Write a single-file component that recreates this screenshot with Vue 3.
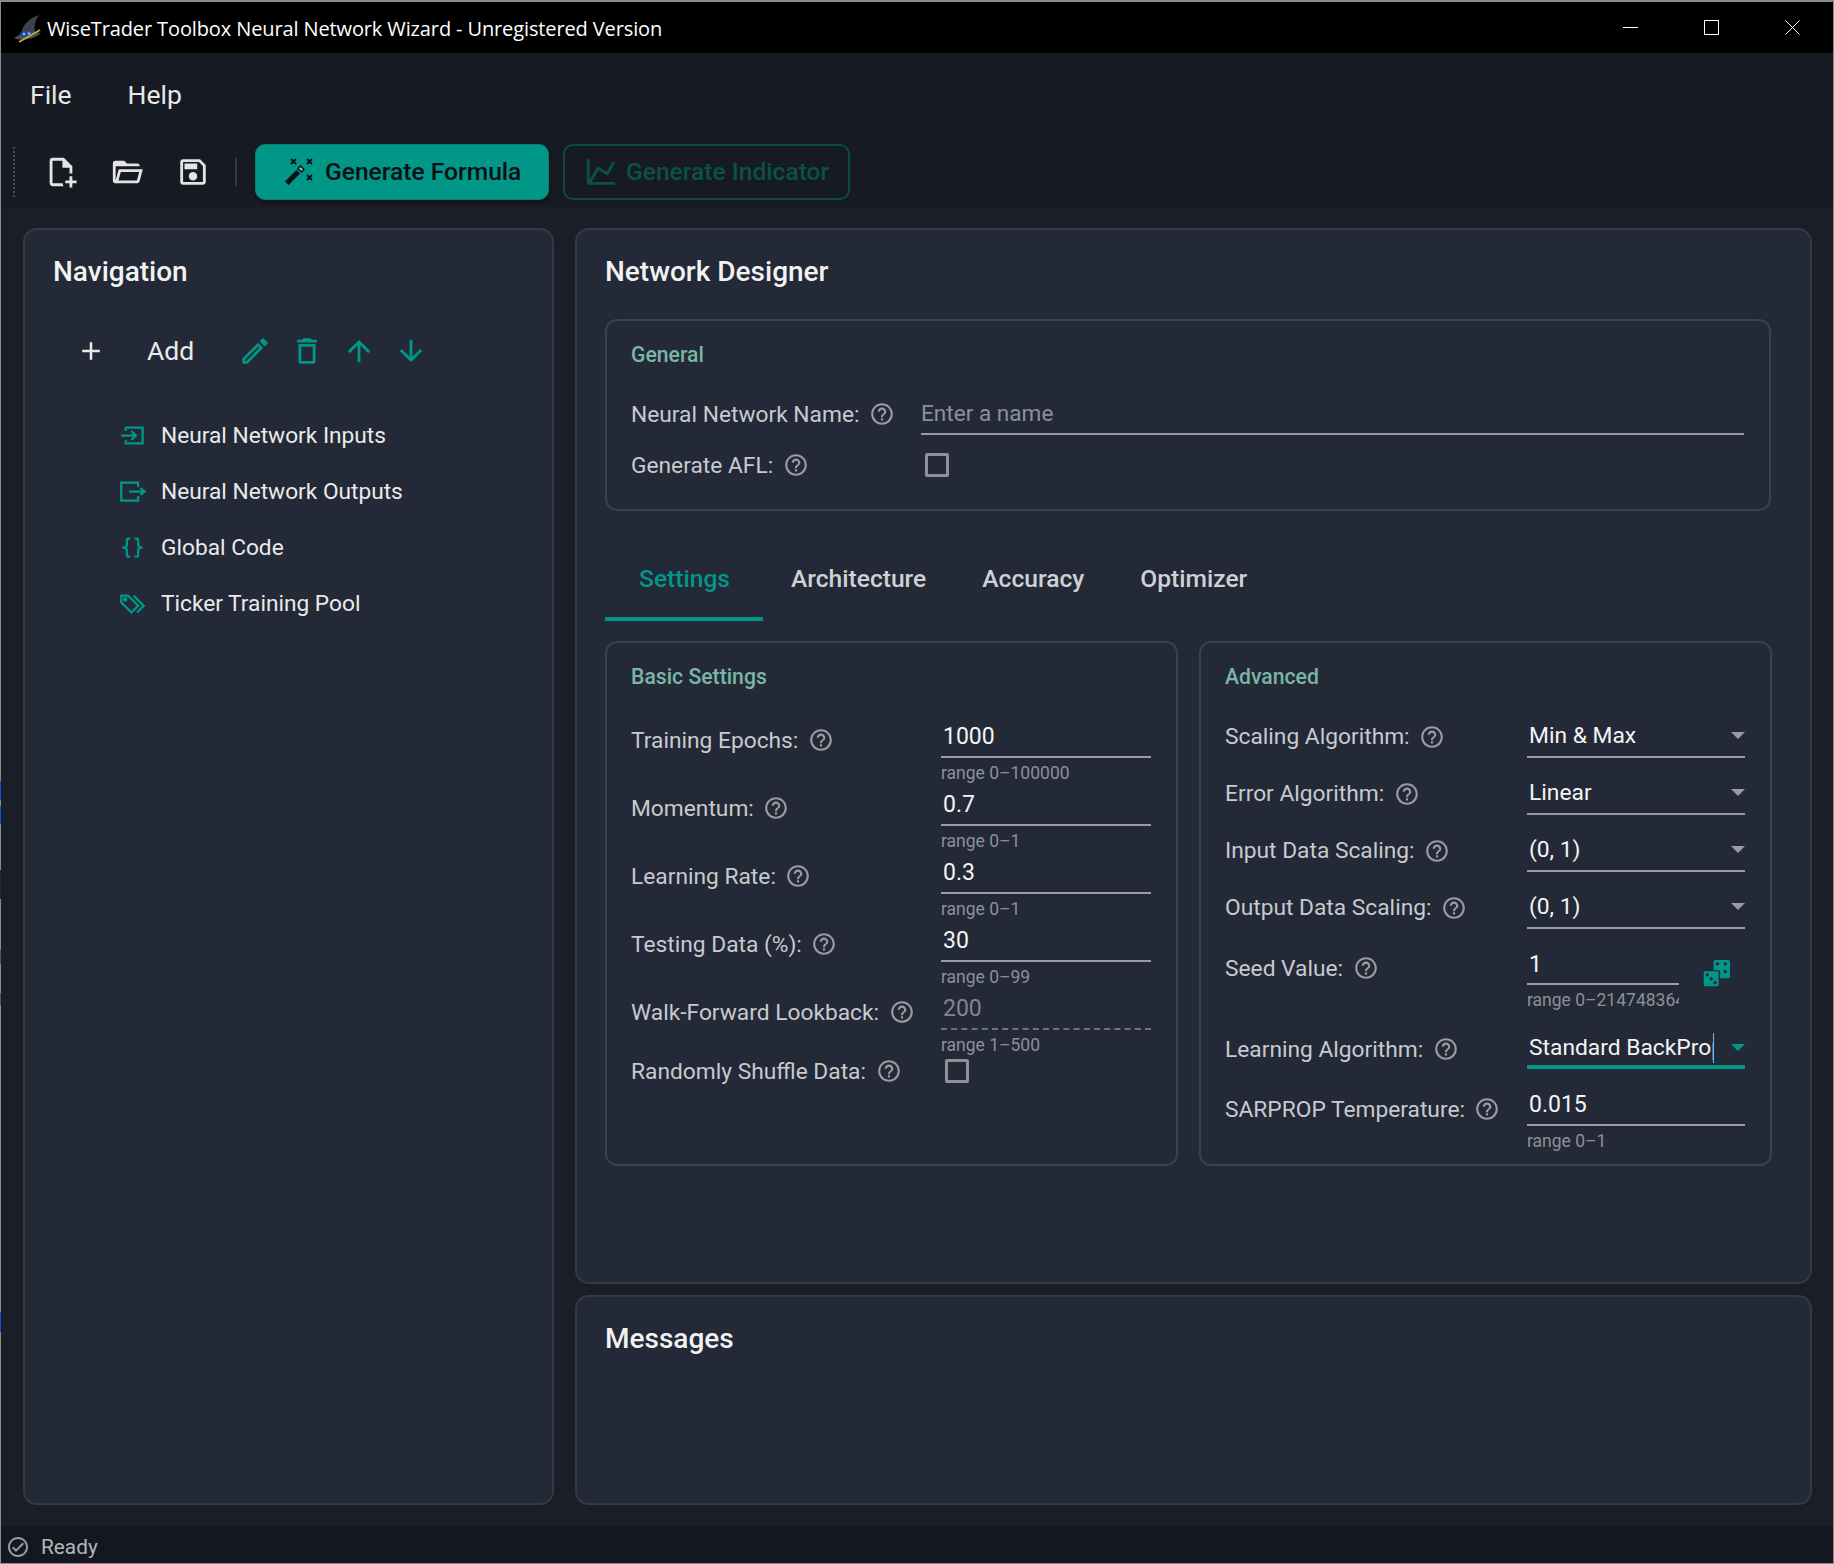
<template>
  <div class="window">
    <!-- bits of the desktop showing past the window edge -->
    <i v-for="s in edgeBits" :key="s.top" class="edge-bit" :style="{ top: s.top + 'px', height: s.height + 'px', background: s.color }"></i>

    <!-- title bar -->
    <div class="titlebar">
      <svg class="hat" viewBox="0 0 28 28">
        <path d="M7 18 C9 11 13 4 25 0 C21 5 20 11 21 17 Z" fill="#3f4247" />
        <path d="M0 23 C6 18 20 16 27 18 C22 23 8 27 0 23 Z" fill="#4d5056" />
        <path d="M6 18 C11 16 16 16 21 16 L21 20 C16 21 11 22 7 22 Z" fill="#234a9c" />
        <circle cx="10" cy="19" r="1.300" fill="#5fd0e8" />
        <circle cx="15" cy="18.500" r="1.300" fill="#5fd0e8" />
        <path d="M5 27 L26 15" stroke="#d7a92c" stroke-width="1.600" />
      </svg>
      <span class="title-text">WiseTrader Toolbox Neural Network Wizard - Unregistered Version</span>
      <div class="win-buttons">
        <svg viewBox="0 0 15 15"><path d="M0 7.500H15" stroke="#fff" stroke-width="1" /></svg>
        <svg viewBox="0 0 15 15"><rect x="0.500" y="0.500" width="14" height="14" fill="none" stroke="#fff" stroke-width="1" /></svg>
        <svg viewBox="0 0 15 15"><path d="M0.500 0.500L14.500 14.500M14.500 0.500L0.500 14.500" stroke="#fff" stroke-width="1" /></svg>
      </div>
    </div>

    <!-- menu + toolbar -->
    <div class="top-area">
      <div class="menubar">
        <span>File</span>
        <span>Help</span>
      </div>
      <div class="toolbar">
        <div class="grip"></div>
        <svg class="tool-icon" viewBox="0 0 24 24"><path :d="icons.fileplus" /></svg>
        <svg class="tool-icon" viewBox="0 0 24 24"><path :d="icons.folder" /></svg>
        <svg class="tool-icon" viewBox="0 0 24 24"><path :d="icons.save" /></svg>
        <div class="tool-sep"></div>
        <div class="btn-primary">
          <svg class="btn-icon wand" viewBox="0 0 28 28">
            <path d="M0 23.500 L11.500 12 L15 15.500 L3.500 27 Z" fill="#0b0f14" />
            <path d="M13 10.500 L15.500 8 L19 11.500 L16.500 14 Z" fill="#7fd0c6" stroke="#0b0f14" stroke-width="1.500" />
            <path d="M6 1L11 6M11 1L6 6M22 1L27 6M27 1L22 6M22 17L27 22M27 17L22 22" stroke="#0b0f14" stroke-width="1.800" />
          </svg>
          <span>Generate Formula</span>
        </div>
        <div class="btn-disabled">
          <svg class="btn-icon chart" viewBox="0 0 24 24"><path :d="icons.chart" fill="#0d4f4a" /></svg>
          <span>Generate Indicator</span>
        </div>
      </div>
    </div>

    <div class="main">
      <!-- navigation -->
      <section class="panel nav-panel">
        <h2 class="panel-title">Navigation</h2>
        <div class="nav-actions">
          <svg class="add-plus" viewBox="0 0 24 24"><path :d="icons.plus" /></svg>
          <span class="add-label">Add</span>
          <svg class="action" viewBox="0 0 24 24"><path :d="icons.pencil" /></svg>
          <svg class="action" viewBox="0 0 24 24"><path :d="icons.trash" /></svg>
          <svg class="action" viewBox="0 0 24 24"><path :d="icons.up" /></svg>
          <svg class="action" viewBox="0 0 24 24"><path :d="icons.down" /></svg>
        </div>
        <ul class="nav-list">
          <li>
            <svg class="nav-icon" viewBox="0 0 24 24" fill="none" stroke="#009688" stroke-width="2">
              <path d="M6 8V5H21V19H6V16M2 12H15M11 8L15 12L11 16" />
            </svg>
            <span>Neural Network Inputs</span>
          </li>
          <li>
            <svg class="nav-icon" viewBox="0 0 24 24" fill="none" stroke="#009688" stroke-width="2">
              <path d="M17 8V4H2V20H17V16M9 12H22M19 9L23 12L19 15" />
            </svg>
            <span>Neural Network Outputs</span>
          </li>
          <li>
            <svg class="nav-icon" viewBox="0 0 24 24"><path :d="icons.braces" fill="#009688" /></svg>
            <span>Global Code</span>
          </li>
          <li>
            <svg class="nav-icon" viewBox="0 0 24 24" fill="none" stroke="#009688" stroke-width="2">
              <path d="M2 5V11L11 20L17 14L8 5Z" />
              <path d="M13 5L22 14L16 20" />
              <circle cx="5.500" cy="8.500" r="1" />
            </svg>
            <span>Ticker Training Pool</span>
          </li>
        </ul>
      </section>

      <div class="right-col">
        <section class="panel designer">
          <h2 class="panel-title">Network Designer</h2>

          <div class="group general">
            <h3 class="group-title">General</h3>
            <div class="general-row">
              <label class="lbl">Neural Network Name:<svg class="help" viewBox="0 0 24 24"><path :d="icons.help" /></svg></label>
              <div class="name-input">Enter a name</div>
            </div>
            <div class="general-row afl">
              <label class="lbl">Generate AFL:<svg class="help" viewBox="0 0 24 24"><path :d="icons.help" /></svg></label>
              <div class="checkbox"></div>
            </div>
          </div>

          <div class="tabs">
            <div v-for="(tab, i) in tabs" :key="tab" class="tab" :class="{ active: i === 0 }">{{ tab }}</div>
          </div>

          <div class="settings">
            <div class="group basic">
              <h3 class="group-title">Basic Settings</h3>
              <div v-for="row in basicRows" :key="row.label" class="form-row basic-row">
                <label class="lbl">{{ row.label }}<svg class="help" viewBox="0 0 24 24"><path :d="icons.help" /></svg></label>
                <div class="field">
                  <div class="value" :class="{ disabled: row.disabled }">{{ row.value }}</div>
                  <div class="hint">{{ row.hint }}</div>
                </div>
              </div>
              <div class="form-row shuffle-row">
                <label class="lbl">Randomly Shuffle Data:<svg class="help" viewBox="0 0 24 24"><path :d="icons.help" /></svg></label>
                <div class="checkbox"></div>
              </div>
            </div>

            <div class="group advanced">
              <h3 class="group-title">Advanced</h3>
              <div v-for="row in selectRows" :key="row.label" class="form-row adv-row">
                <label class="lbl">{{ row.label }}<svg class="help" viewBox="0 0 24 24"><path :d="icons.help" /></svg></label>
                <div class="select">
                  <span>{{ row.value }}</span>
                  <i class="arrow"></i>
                </div>
              </div>
              <div class="form-row seed-row">
                <label class="lbl">Seed Value:<svg class="help" viewBox="0 0 24 24"><path :d="icons.help" /></svg></label>
                <div class="seed-field">
                  <div class="value">1</div>
                  <div class="hint">range 0–2147483647</div>
                </div>
                <svg class="dice" viewBox="0 0 28 28">
                  <rect x="11" y="0" width="17" height="19" rx="2" fill="#009688" />
                  <rect x="0" y="11" width="17" height="17" rx="2" fill="#009688" stroke="#232936" stroke-width="1.500" />
                  <circle cx="15" cy="4" r="1.700" fill="#232936" />
                  <circle cx="23" cy="4" r="1.700" fill="#232936" />
                  <circle cx="23" cy="12" r="1.700" fill="#232936" />
                  <circle cx="4.500" cy="15.500" r="1.700" fill="#232936" />
                  <circle cx="8.500" cy="19.500" r="1.700" fill="#232936" />
                  <circle cx="12.500" cy="23.500" r="1.700" fill="#232936" />
                </svg>
              </div>
              <div class="form-row learn-row">
                <label class="lbl">Learning Algorithm:<svg class="help" viewBox="0 0 24 24"><path :d="icons.help" /></svg></label>
                <div class="select focused">
                  <span class="clip">Standard BackPropagation</span>
                  <i class="arrow"></i>
                </div>
              </div>
              <div class="form-row sarprop-row">
                <label class="lbl">SARPROP Temperature:<svg class="help" viewBox="0 0 24 24"><path :d="icons.help" /></svg></label>
                <div class="field">
                  <div class="value">0.015</div>
                  <div class="hint">range 0–1</div>
                </div>
              </div>
            </div>
          </div>
        </section>

        <section class="panel messages">
          <h2 class="panel-title">Messages</h2>
        </section>
      </div>
    </div>

    <div class="statusbar">
      <svg class="status-icon" viewBox="0 0 24 24"><path :d="icons.check" /></svg>
      <span>Ready</span>
    </div>
  </div>
</template>

<script setup>
const tabs = ['Settings', 'Architecture', 'Accuracy', 'Optimizer']

const edgeBits = [
  { top: 779, height: 19, color: '#0a55d8' },
  { top: 804, height: 18, color: '#0a55d8' },
  { top: 868, height: 29, color: '#1a2a48' },
  { top: 948, height: 14, color: '#46587a' },
  { top: 991, height: 12, color: '#46587a' },
  { top: 1310, height: 20, color: '#0a55d8' }
]

const basicRows = [
  { label: 'Training Epochs:', value: '1000', hint: 'range 0–100000' },
  { label: 'Momentum:', value: '0.7', hint: 'range 0–1' },
  { label: 'Learning Rate:', value: '0.3', hint: 'range 0–1' },
  { label: 'Testing Data (%):', value: '30', hint: 'range 0–99' },
  { label: 'Walk-Forward Lookback:', value: '200', hint: 'range 1–500', disabled: true }
]

const selectRows = [
  { label: 'Scaling Algorithm:', value: 'Min & Max' },
  { label: 'Error Algorithm:', value: 'Linear' },
  { label: 'Input Data Scaling:', value: '(0, 1)' },
  { label: 'Output Data Scaling:', value: '(0, 1)' }
]

// material design icon paths
const icons = {
  fileplus: 'M14 2H6C4.89 2 4 2.89 4 4V20C4 21.11 4.89 22 6 22H13.81C13.46 21.39 13.22 20.72 13.09 20H6V4H13V9H18V13.08C18.33 13.03 18.67 13 19 13C19.34 13 19.67 13.03 20 13.08V8L14 2M18 15V18H15V20H18V23H20V20H23V18H20V15H18Z',
  folder: 'M6.1,10L4,18V8H21A2,2 0 0,0 19,6H12L10,4H4A2,2 0 0,0 2,6V18A2,2 0 0,0 4,20H19C19.9,20 20.7,19.4 20.9,18.5L23.2,10H6.1M19,18H6L7.6,12H20.6L19,18Z',
  save: 'M17 3H5C3.89 3 3 3.9 3 5V19C3 20.1 3.89 21 5 21H19C20.1 21 21 20.1 21 19V7L17 3M19 19H5V5H16.17L19 7.83V19M12 12C10.34 12 9 13.34 9 15S10.34 18 12 18 15 16.66 15 15 13.66 12 12 12M6 6H15V10H6V6Z',
  chart: 'M16,11.78L20.24,4.45L21.97,5.45L16.74,14.5L10.23,10.75L5.46,19H22V21H2V3H4V17.54L9.5,8L16,11.78Z',
  plus: 'M19,13H13V19H11V13H5V11H11V5H13V11H19V13Z',
  pencil: 'M14.06,9L15,9.94L5.92,19H5V18.08L14.06,9M17.66,3C17.41,3 17.15,3.1 16.96,3.29L15.13,5.12L18.88,8.87L20.71,7.04C21.1,6.65 21.1,6 20.71,5.63L18.37,3.29C18.17,3.09 17.92,3 17.66,3M14.06,6.19L3,17.25V21H6.75L17.81,9.94L14.06,6.19Z',
  trash: 'M6,19A2,2 0 0,0 8,21H16A2,2 0 0,0 18,19V7H6V19M8,9H16V19H8V9M15.5,4L14.5,3H9.5L8.5,4H5V6H19V4H15.5Z',
  up: 'M13,20H11V8L5.5,13.5L4.08,12.08L12,4.16L19.92,12.08L18.5,13.5L13,8V20Z',
  down: 'M11,4H13V16L18.5,10.5L19.92,11.92L12,19.84L4.08,11.92L5.5,10.5L11,16V4Z',
  braces: 'M8,3A2,2 0 0,0 6,5V9A2,2 0 0,1 4,11H3V13H4A2,2 0 0,1 6,15V19A2,2 0 0,0 8,21H10V19H8V14A2,2 0 0,0 6,12A2,2 0 0,0 8,10V5H10V3M16,3A2,2 0 0,1 18,5V9A2,2 0 0,0 20,11H21V13H20A2,2 0 0,0 18,15V19A2,2 0 0,1 16,21H14V19H16V14A2,2 0 0,1 18,12A2,2 0 0,1 16,10V5H14V3H16Z',
  help: 'M11 18h2v-2h-2v2zm1-16C6.48 2 2 6.48 2 12s4.48 10 10 10 10-4.48 10-10S17.52 2 12 2zm0 18c-4.41 0-8-3.59-8-8s3.59-8 8-8 8 3.59 8 8-3.59 8-8 8zm0-14c-2.21 0-4 1.79-4 4h2c0-1.1.9-2 2-2s2 .9 2 2c0 2-3 1.75-3 5h2c0-2.25 3-2.5 3-5 0-2.21-1.79-4-4-4z',
  check: 'M12 2C6.5 2 2 6.5 2 12S6.5 22 12 22 22 17.5 22 12 17.5 2 12 2M12 20C7.59 20 4 16.41 4 12S7.59 4 12 4 20 7.59 20 12 16.41 20 12 20M16.59 7.58L10 14.17L7.41 11.59L6 13L10 17L18 9L16.59 7.58Z'
}
</script>

<style>
html, body {
  margin: 0;
  background: #1a1e27;
}
</style>

<style scoped>
.window {
  position: relative;
  width: 1834px;
  height: 1564px;
  box-sizing: border-box;
  display: flex;
  flex-direction: column;
  border: 1px solid #8a8a8a;
  border-top-width: 2px;
  font-family: Roboto, "Liberation Sans", sans-serif;
  color: #eaeaea;
  background: #1a1e27;
}
.edge-bit {
  position: absolute;
  left: -1px;
  width: 1px;
}

/* title bar */
.titlebar {
  height: 51px;
  flex: none;
  background: #000;
  display: flex;
  align-items: center;
  padding-left: 13px;
  color: #fff;
}
.hat {
  width: 28px;
  height: 28px;
  margin-right: 5px;
  margin-top: 2px;
}
.title-text {
  font-family: "Open Sans", "Liberation Sans", sans-serif;
  font-size: 20px;
  letter-spacing: -0.12px;
  padding-top: 2px;
}
.win-buttons {
  margin-left: auto;
  display: flex;
  gap: 66px;
  padding-right: 33px;
}
.win-buttons svg {
  width: 15px;
  height: 15px;
  display: block;
}

/* menu and toolbar */
.top-area {
  background: #161a22;
  height: 154px;
  flex: none;
  display: flex;
  flex-direction: column;
}
.menubar {
  height: 82px;
  flex: none;
  display: flex;
  align-items: center;
  gap: 56px;
  padding-left: 29px;
  font-size: 26.500px;
  color: #e8e8e8;
  box-sizing: border-box;
}
.toolbar {
  display: flex;
  align-items: center;
  padding-left: 12px;
  height: 66px;
  padding-top: 8px;
  box-sizing: border-box;
}
.grip {
  width: 0;
  height: 50px;
  border-left: 2px dotted #4a4f59;
  margin-right: 29px;
}
.tool-icon {
  width: 34px;
  height: 34px;
  fill: #e4e4e4;
  margin-right: 32px;
}
.tool-sep {
  width: 2px;
  height: 28px;
  background: #343840;
  margin-left: -7px;
  margin-right: 18px;
}
.btn-primary,
.btn-disabled {
  height: 56px;
  box-sizing: border-box;
  border-radius: 10px;
  display: flex;
  align-items: center;
  font-size: 24.600px;
  font-weight: 500;
}
.btn-primary span,
.btn-disabled span {
  margin-top: -2px;
}
.btn-primary {
  width: 294px;
  padding-left: 29px;
  background: #009688;
  color: #0b0f14;
  box-shadow: 0 2px 3px rgba(0, 0, 0, 0.4);
  border: 1px solid #0a8175;
  margin-right: 14px;
}
.btn-disabled {
  width: 287px;
  padding-left: 19px;
  border: 2px solid #0c4a47;
  color: #0d4f4a;
}
.btn-icon.wand {
  width: 28px;
  height: 28px;
  margin-right: 12px;
}
.btn-icon.chart {
  width: 34px;
  height: 34px;
  margin-right: 8px;
}

/* main */
.main {
  flex: 1;
  min-height: 0;
  display: grid;
  grid-template-columns: 531px 1fr;
  gap: 21px;
  padding: 21px 21px 21px 22px;
}
.right-col {
  display: flex;
  flex-direction: column;
  gap: 11px;
  min-height: 0;
}
.panel {
  box-sizing: border-box;
  background: #232936;
  border: 2px solid #333945;
  border-radius: 14px;
  padding: 0 28px;
}
.panel-title {
  margin: 0;
  padding-top: 26px;
  font-size: 28px;
  line-height: 32px;
  font-weight: 500;
  color: #f2f2f2;
}

/* navigation */
.nav-actions {
  display: flex;
  align-items: center;
  margin-top: 41px;
  height: 44px;
  padding-left: 23px;
}
.add-plus {
  width: 30px;
  height: 30px;
  fill: #eaeaea;
  margin-right: 41px;
}
.add-label {
  font-size: 26.500px;
  width: 91px;
  margin-top: -2px;
}
.action {
  width: 34px;
  height: 34px;
  fill: #009688;
  margin-right: 18px;
}
.nav-list {
  list-style: none;
  margin: 34px 0 0;
  padding: 0 0 0 66px;
}
.nav-list li {
  height: 56px;
  display: flex;
  align-items: center;
  font-size: 22.700px;
  color: #eaeaea;
}
.nav-icon {
  width: 27px;
  height: 27px;
  margin-right: 15px;
}

/* network designer */
.designer {
  flex: 1;
  min-height: 0;
}
.messages {
  height: 210px;
  flex: none;
}
.group {
  box-sizing: border-box;
  border: 2px solid #3a404c;
  border-radius: 12px;
  padding: 20px 25px 0 24px;
}
.group-title {
  margin: 0;
  font-size: 21.200px;
  line-height: 28px;
  font-weight: 500;
  color: #7bb5a6;
}
.lbl {
  display: flex;
  align-items: center;
  font-size: 22.750px;
  color: #c8cacf;
  white-space: nowrap;
}
.help {
  width: 26px;
  height: 26px;
  fill: #9a9ca1;
  margin-left: 9.500px;
  flex: none;
}
.general {
  margin-top: 31px;
  width: 1166px;
  height: 192px;
}
.general-row {
  display: flex;
}
.general-row .lbl {
  width: 290px;
  height: 42px;
  margin-top: 24px;
}
.name-input {
  flex: 1;
  box-sizing: border-box;
  height: 48px;
  margin-top: 18px;
  padding-top: 9px;
  line-height: 36px;
  font-size: 22.600px;
  color: #8d9097;
  border-bottom: 2px solid #9a9ca1;
}
.general-row.afl .lbl {
  margin-top: 8px;
  height: 44px;
}
.checkbox {
  box-sizing: border-box;
  width: 24px;
  height: 24px;
  border: 3px solid #8f9196;
  border-radius: 2px;
}
.afl .checkbox {
  margin: 18px 0 0 4px;
}
.tabs {
  display: flex;
  margin-top: 29px;
  height: 81px;
}
.tab {
  box-sizing: border-box;
  height: 81px;
  line-height: 78px;
  padding: 0 28px;
  font-size: 24.600px;
  font-weight: 500;
  color: #cfd1d6;
}
.tab.active {
  color: #009688;
  width: 158px;
  padding: 0 0 0 34px;
  border-bottom: 4px solid #009688;
}
.settings {
  display: flex;
  gap: 21px;
  margin-top: 20px;
}
.basic,
.advanced {
  width: 573px;
  height: 525px;
}
.form-row {
  display: flex;
}
.basic-row {
  height: 68px;
}
.basic .group-title,
.advanced .group-title {
  margin-bottom: 26px;
}
.basic-row .lbl {
  width: 310px;
  height: 46px;
  flex: none;
}
.field {
  flex: 1;
  min-width: 0;
}
.value {
  box-sizing: border-box;
  height: 41px;
  line-height: 40px;
  padding-left: 2px;
  font-size: 23px;
  color: #f4f4f4;
  border-bottom: 2px solid #9a9ca1;
}
.value.disabled {
  color: #83868c;
  border-bottom: 2px dashed #6f7278;
}
.hint {
  padding-top: 3px;
  line-height: 24px;
  font-size: 17.500px;
  color: #8d9097;
  white-space: nowrap;
  overflow: hidden;
}
.shuffle-row .lbl {
  width: 314px;
  height: 28px;
  flex: none;
}
.shuffle-row .checkbox {
  margin-top: 2px;
}
.adv-row {
  height: 57px;
}
.adv-row .lbl,
.seed-row .lbl,
.learn-row .lbl,
.sarprop-row .lbl {
  width: 302px;
  flex: none;
}
.adv-row .lbl {
  height: 39px;
}
.select {
  box-sizing: border-box;
  flex: 1;
  min-width: 0;
  height: 41px;
  line-height: 38px;
  padding: 0 0 0 2px;
  font-size: 22.800px;
  color: #f4f4f4;
  border-bottom: 2px solid #9a9ca1;
  display: flex;
  justify-content: space-between;
}
.arrow {
  width: 0;
  height: 0;
  margin-top: 15px;
  border-left: 7px solid transparent;
  border-right: 7px solid transparent;
  border-top: 7px solid #9a9ca1;
}
.seed-row {
  height: 67px;
  margin-bottom: 17px;
}
.seed-row .lbl {
  height: 46px;
}
.seed-field {
  width: 152px;
  flex: none;
}
.seed-field .value {
  height: 40px;
  line-height: 39px;
}
.dice {
  width: 27px;
  height: 27px;
  margin: 15px 0 0 24px;
}
.learn-row {
  height: 40px;
  margin-bottom: 17px;
}
.learn-row .lbl {
  height: 40px;
}
.select.focused {
  height: 40px;
  border-bottom: 4px solid #009688;
}
.select.focused .arrow {
  border-top-color: #009688;
}
.clip {
  width: 184px;
  overflow: hidden;
  white-space: nowrap;
  border-right: 1px solid #7fb8e8;
  height: 30px;
  margin-top: 4px;
  line-height: 30px;
}
.sarprop-row .lbl {
  height: 46px;
}
.sarprop-row .value {
  height: 40px;
  line-height: 38px;
}

/* status bar */
.statusbar {
  height: 37px;
  flex: none;
  background: #14171f;
  display: flex;
  align-items: center;
  padding-left: 5px;
  padding-top: 4px;
  box-sizing: border-box;
  font-size: 20.800px;
  color: #b4b6ba;
}
.status-icon {
  width: 24px;
  height: 24px;
  fill: #9a9ca1;
  margin-right: 11px;
}
</style>
